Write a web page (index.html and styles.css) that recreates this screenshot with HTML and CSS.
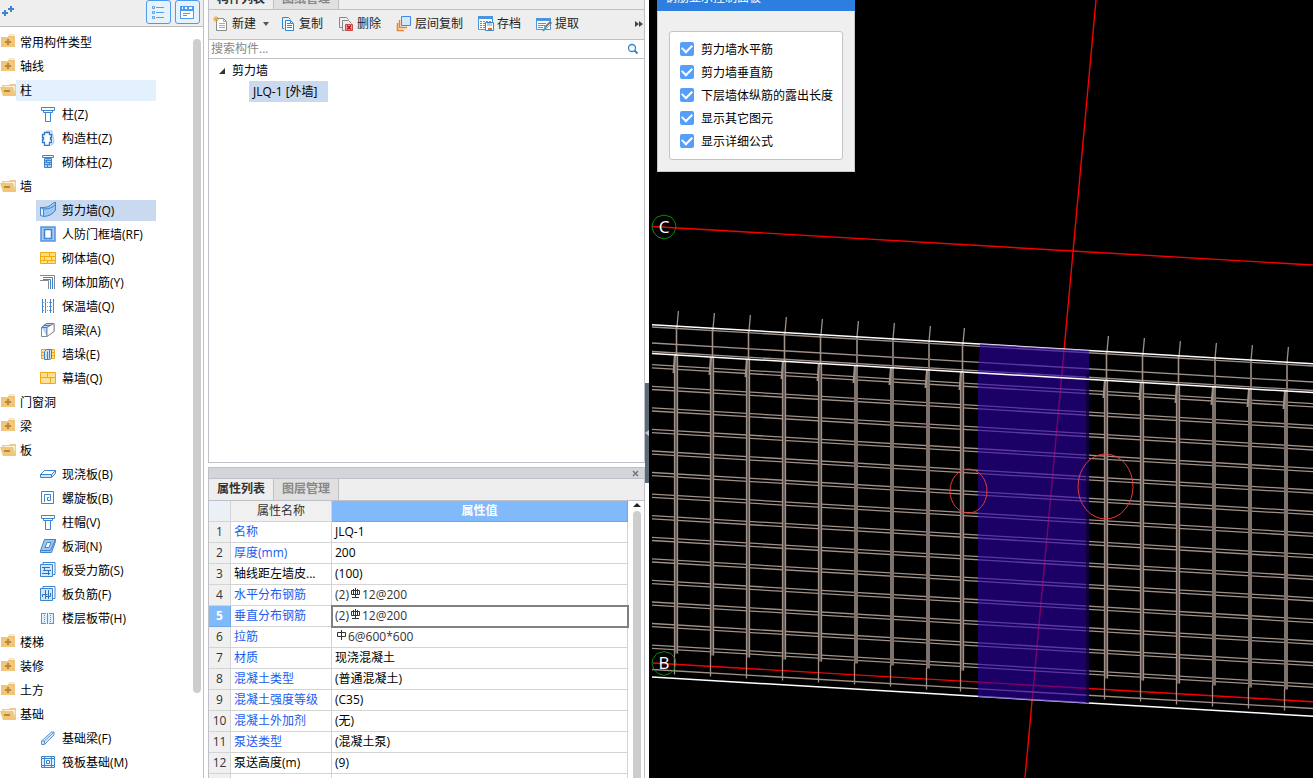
FILE: index.html
```html
<!DOCTYPE html>
<html lang="zh-CN">
<head>
    <meta charset="UTF-8">
    <meta name="viewport" content="width=device-width, initial-scale=1.0">
    <title>构件列表</title>
    <link rel="stylesheet" href="styles.css">
</head>
<body>
    <!-- icon set -->
    <svg class="icon-defs" aria-hidden="true">
        <symbol id="folder" viewBox="0 0 16 16"><path d="M8 1.500L9 .5h5l1 1z" fill="#f3cf8d"/><path d="M1 3h14v10H1z" fill="#efc67c"/><path d="M1 3h7V2h7v1z" fill="#efc67c"/><path d="M5 8h6M8 5v6" stroke="#b98a35" stroke-width="2"/></symbol>
        <symbol id="folder-open" viewBox="0 0 16 16"><path d="M2 3h7l1-1h6v12H3z" fill="#f0cb86"/><path d="M3 4h12v8z" fill="#fdf3dc"/><path d="M0 5h13l3 9H3z" fill="#efc67c"/><path d="M4 9h6" stroke="#b98a35" stroke-width="2"/></symbol>
        <symbol id="column" viewBox="0 0 16 16"><path d="M1.500 1.500h13v3h-13zM3.500 4.500h9v2h-9zM5.500 6.500h5v9h-5z" fill="#fff" stroke="#3c84cf"/></symbol>
        <symbol id="struct-column" viewBox="0 0 16 16"><path d="M6 2l2-1h4v3l1 1v3l1 2-1 4-2 1" fill="none" stroke="#9dbde0"/><path d="M4.500 2.500h5v2h2v3h-1v2h1v3h-2v3h-5v-3h-2v-3h1v-2h-1v-3h2z" fill="#fff" stroke="#2f7ac8" stroke-width="1.300"/></symbol>
        <symbol id="brick-column" viewBox="0 0 16 16"><path d="M2.500 1.500h11v2h-11z" fill="#fff" stroke="#3c84cf"/><path d="M4.500 4.500h7v9h-7z" fill="#a9cdf3" stroke="#3c84cf"/><path d="M5 6.500h6M5 8.500h6M5 10.500h6M8 5v1M6.500 7v1M9.500 9v1M7.500 11v2" stroke="#3c84cf"/></symbol>
        <symbol id="shear-wall" viewBox="0 0 16 16"><path d="M.5 5.500Q9 6 12.500 1.500L15.500 0v8Q12 14 3.500 14.500l-3-1z" fill="#9cc8f3" stroke="#3c84cf"/><path d="M.5 5.500l3 1.500Q12 7 15.500 2.500M3.500 7v7.500" fill="none" stroke="#3c84cf"/><path d="M1 6.500l2 1v6l-2-.5z" fill="#e4f0fc"/></symbol>
        <symbol id="frame-wall" viewBox="0 0 16 16"><path d="M1 1h14v14H1z" fill="#a9cbf2" stroke="#5793da" stroke-width="1.500"/><path d="M4.500 3.500h7v9h-7z" fill="#fff" stroke="#3c84cf" stroke-width="1.500"/></symbol>
        <symbol id="brick-wall" viewBox="0 0 16 16"><path d="M.5 2.500h15v11H.5z" fill="#ffdf8e" stroke="#f6a90a"/><path d="M1 6.500h14M1 10.500h14M9.500 3v3M4.500 7v3M11.500 7v3M7.500 11v2" stroke="#f6a90a"/></symbol>
        <symbol id="rebar-corner" viewBox="0 0 16 16"><path d="M0 1.500h14.500V15M0 6.500h8.500V15" fill="none" stroke="#85898e"/><path d="M3 3.500h9.500V15M3 5.500h7.500V15" fill="none" stroke="#3c84cf"/></symbol>
        <symbol id="insulated-wall" viewBox="0 0 16 16"><path d="M2.500 1v14M5.500 1v14M10.500 1v14M13.500 1v14" stroke="#3c84cf"/><path d="M3 4.500h11M3 8.500h11M3 12.500h11" stroke="#7f9dbd" stroke-dasharray="1 1"/></symbol>
        <symbol id="hidden-beam" viewBox="0 0 16 16"><path d="M1.500 5.500l5-4h7.500v8l-8 5h-4.500z" fill="#fff" stroke="#85898e"/><path d="M1.500 5.500l5-4h7.500l-7 4v9M1.500 5.500h5.500" fill="#b9d5f4" stroke="#3c84cf"/><path d="M7 5.500l7-4v8l-7 5z" fill="#fff" stroke="#85898e"/><path d="M4 3.500h6.500" stroke="#3c84cf"/></symbol>
        <symbol id="wall-pier" viewBox="0 0 16 16"><path d="M1.500 3.500h13v9h-13z" fill="#ffe095" stroke="#f6a90a"/><path d="M1 6.500h14M1 9.500h14" stroke="#f6a90a"/><path d="M4.500 5.500l2-2h5v9l-2 1h-5z" fill="#cfe2f8" stroke="#3c84cf"/><path d="M7.500 5.500v8M9.500 3.500v9" stroke="#3c84cf"/></symbol>
        <symbol id="curtain-wall" viewBox="0 0 16 16"><path d="M.5 2.500h15v11H.5z" fill="#ffe095" stroke="#f6a90a"/><path d="M1 7.500h14M7.500 3v5M10.500 8v5" stroke="#f6a90a"/></symbol>
        <symbol id="slab" viewBox="0 0 16 16"><path d="M.5 8.500l4-4h11v3l-4 4H.5z" fill="#d5e6f8" stroke="#3c84cf"/><path d="M.5 8.500l4-4h11l-4 4z" fill="#fff" stroke="#3c84cf"/><path d="M11.500 8.500v3" stroke="#3c84cf"/></symbol>
        <symbol id="spiral-slab" viewBox="0 0 16 16"><path d="M1.500 1.500h12v12h-12z" fill="#fff" stroke="#3c84cf"/><path d="M4.500 12v-7.500h6v6h-3v-3h1.500" fill="none" stroke="#3c84cf"/></symbol>
        <symbol id="slab-hole" viewBox="0 0 16 16"><path d="M.5 14.500v-2l4-11h11v2l-4 11z" fill="#9cc5f0" stroke="#3c84cf"/><path d="M.5 12.500h10l5-11" fill="none" stroke="#3c84cf"/><path d="M5 9.500l2-5h4l-2 5z" fill="#fff" stroke="#3c84cf"/></symbol>
        <symbol id="slab-rebar" viewBox="0 0 16 16"><path d="M3 2.500V.5h12v12h-2" fill="#fff" stroke="#3c84cf"/><path d="M.5 2.500h12v12H.5z" fill="#d5e8fb" stroke="#3c84cf"/><path d="M2 5.500h8M3 8.500h8M2 11.500h8M4.500 5v4M8.500 8v5" stroke="#2f72b8"/></symbol>
        <symbol id="slab-negative" viewBox="0 0 16 16"><path d="M3 2.500V.5h12v12h-2" fill="#fff" stroke="#3c84cf"/><path d="M.5 2.500h12v12H.5z" fill="#d5e8fb" stroke="#3c84cf"/><path d="M5.500 4v9M8.500 4v9M2.500 11V8.500h5M6 10.500h4.500V7" fill="none" stroke="#2f72b8"/></symbol>
        <symbol id="slab-strip" viewBox="0 0 16 16"><path d="M1.500 3.500h12v10h-12z" fill="#e2effc"/><path d="M1 3.500h5M9 3.500h5M1 13.500h5M9 13.500h5M1.500 3v11M13.500 3v11M7.500 3v11" stroke="#5a94d6"/><path d="M4.500 5v8M10.500 5v8" stroke="#5a94d6" stroke-dasharray="1 1"/></symbol>
        <symbol id="found-beam" viewBox="0 0 16 16"><path d="M1.500 11l10-9h2.500v3l-9.500 9.500h-3z" fill="#dbe9f9" stroke="#5a94d6"/><path d="M1.500 11h3v3.500M4.500 11L14 2" fill="none" stroke="#5a94d6"/></symbol>
        <symbol id="raft" viewBox="0 0 16 16"><path d="M1.500 2.500h13v11h-13z" fill="#e5f0fc" stroke="#3c84cf"/><path d="M4.500 2v12M11.500 2v12M1 4.500h14M1 11.500h14" stroke="#3c84cf"/><path d="M6.500 6.500h3v3h-3z" fill="#fff" stroke="#3c84cf"/></symbol>
        <symbol id="rebar-c" viewBox="0 0 11 11"><path d="M1.500 2.500h8v4h-8zM5.500 0v10M3.500 1v6M7.500 1v6M2 9.500h7" fill="none" stroke="#333"/></symbol>
        <symbol id="rebar-a" viewBox="0 0 11 11"><path d="M1.500 2.500h8v4h-8zM5.500 0v10" fill="none" stroke="#333"/></symbol>
    </svg>

    <div class="app">
        <nav class="sidebar">
            <div class="sidebar-bar">
                <button class="add-btn" aria-label="添加"><svg width="14" height="14"><path d="M2 9h6M5 6v6M8 5h6M11 2v6" stroke="#3c84cf" stroke-width="2"/></svg></button>
                <button class="view-btn" aria-label="列表"><svg width="16" height="16"><path d="M2.500 2.500h2v2h-2zM2.500 7.500h2v2h-2zM2.500 12.500h2v2h-2zM6 3.500h8M6 8.500h8M6 13.500h8" fill="none" stroke="#5b9fe6"/></svg></button>
                <button class="view-btn" aria-label="面板"><svg width="16" height="16"><path d="M1 2h14v13H1z" fill="#4b9bee"/><path d="M2 7h12v7H2z" fill="#fff"/><path d="M3 4h1M6 4h2M10 4h3" stroke="#fff" stroke-width="2"/><path d="M4 9.500h7M4 11.500h4" stroke="#4b9bee"/></svg></button>
            </div>
            <div class="sidebar-body">
                <ul class="tree">
                    <li><a href="#" class="group"><svg class="icon"><use href="#folder"/></svg><span>常用构件类型</span></a></li>
                    <li><a href="#" class="group"><svg class="icon"><use href="#folder"/></svg><span>轴线</span></a></li>
                    <li><a href="#" class="group hover"><svg class="icon"><use href="#folder-open"/></svg><span>柱</span></a>
                        <ul>
                            <li><a href="#" class="item"><svg class="icon"><use href="#column"/></svg>柱(Z)</a></li>
                            <li><a href="#" class="item"><svg class="icon"><use href="#struct-column"/></svg>构造柱(Z)</a></li>
                            <li><a href="#" class="item"><svg class="icon"><use href="#brick-column"/></svg>砌体柱(Z)</a></li>
                        </ul>
                    </li>
                    <li><a href="#" class="group"><svg class="icon"><use href="#folder-open"/></svg><span>墙</span></a>
                        <ul>
                            <li><a href="#" class="item selected"><svg class="icon"><use href="#shear-wall"/></svg>剪力墙(Q)</a></li>
                            <li><a href="#" class="item"><svg class="icon"><use href="#frame-wall"/></svg>人防门框墙(RF)</a></li>
                            <li><a href="#" class="item"><svg class="icon"><use href="#brick-wall"/></svg>砌体墙(Q)</a></li>
                            <li><a href="#" class="item"><svg class="icon"><use href="#rebar-corner"/></svg>砌体加筋(Y)</a></li>
                            <li><a href="#" class="item"><svg class="icon"><use href="#insulated-wall"/></svg>保温墙(Q)</a></li>
                            <li><a href="#" class="item"><svg class="icon"><use href="#hidden-beam"/></svg>暗梁(A)</a></li>
                            <li><a href="#" class="item"><svg class="icon"><use href="#wall-pier"/></svg>墙垛(E)</a></li>
                            <li><a href="#" class="item"><svg class="icon"><use href="#curtain-wall"/></svg>幕墙(Q)</a></li>
                        </ul>
                    </li>
                    <li><a href="#" class="group"><svg class="icon"><use href="#folder"/></svg><span>门窗洞</span></a></li>
                    <li><a href="#" class="group"><svg class="icon"><use href="#folder"/></svg><span>梁</span></a></li>
                    <li><a href="#" class="group"><svg class="icon"><use href="#folder-open"/></svg><span>板</span></a>
                        <ul>
                            <li><a href="#" class="item"><svg class="icon"><use href="#slab"/></svg>现浇板(B)</a></li>
                            <li><a href="#" class="item"><svg class="icon"><use href="#spiral-slab"/></svg>螺旋板(B)</a></li>
                            <li><a href="#" class="item"><svg class="icon"><use href="#column"/></svg>柱帽(V)</a></li>
                            <li><a href="#" class="item"><svg class="icon"><use href="#slab-hole"/></svg>板洞(N)</a></li>
                            <li><a href="#" class="item"><svg class="icon"><use href="#slab-rebar"/></svg>板受力筋(S)</a></li>
                            <li><a href="#" class="item"><svg class="icon"><use href="#slab-negative"/></svg>板负筋(F)</a></li>
                            <li><a href="#" class="item"><svg class="icon"><use href="#slab-strip"/></svg>楼层板带(H)</a></li>
                        </ul>
                    </li>
                    <li><a href="#" class="group"><svg class="icon"><use href="#folder"/></svg><span>楼梯</span></a></li>
                    <li><a href="#" class="group"><svg class="icon"><use href="#folder"/></svg><span>装修</span></a></li>
                    <li><a href="#" class="group"><svg class="icon"><use href="#folder"/></svg><span>土方</span></a></li>
                    <li><a href="#" class="group"><svg class="icon"><use href="#folder-open"/></svg><span>基础</span></a>
                        <ul>
                            <li><a href="#" class="item"><svg class="icon"><use href="#found-beam"/></svg>基础梁(F)</a></li>
                            <li><a href="#" class="item"><svg class="icon"><use href="#raft"/></svg>筏板基础(M)</a></li>
                        </ul>
                    </li>
                </ul>
                <div class="scroll"><div class="thumb"></div></div>
            </div>
        </nav>

        <div class="middle">
            <section class="panel list-panel">
                <div class="tabs">
                    <button class="tab active">构件列表</button>
                    <button class="tab">图纸管理</button>
                </div>
                <div class="toolbar">
                    <button><svg class="icon"><path d="M3.500 2.500h7l3 3v9h-10z" fill="#fff" stroke="#888"/><path d="M10.500 2.500v3h3M6 7.500h6M6 9.500h6M6 11.500h6" fill="none" stroke="#aaa"/><path d="M3 0v6M0 3h6M1 1l4 4M5 1L1 5" stroke="#f0a030"/></svg>新建</button>
                    <button class="caret" aria-label="更多新建"><svg width="6" height="4"><path d="M0 0h6L3 4z" fill="#555"/></svg></button>
                    <button><svg class="icon"><path d="M4 12.500H2.500v-11h6l2 2" fill="none" stroke="#2f86d2"/><path d="M5.500 4.500h5l3 3v7h-8z" fill="#fff" stroke="#2f86d2"/><path d="M7 7.500h3M7 9.500h5M7 11.500h5M10.500 5v2.500H13" fill="none" stroke="#2f86d2"/></svg>复制</button>
                    <button><svg class="icon"><path d="M4 11.500H1.500v-10h7l2 2M6.500 14.500h-2v-10h6l3 3" fill="none" stroke="#888"/><path d="M7.500 8.500h7v6h-7z" fill="#f0a0a0" stroke="#cf4a4a"/><path d="M9 9.500l4 4M13 9.500l-4 4" stroke="#b81818" stroke-width="1.500"/></svg>删除</button>
                    <button><svg class="icon"><path d="M5.500.5h9v9h-9z" fill="#d5e8fb" stroke="#3c8be0"/><path d="M3.500 4v7.500H11M1.500 7v7.500H8" fill="none" stroke="#f08424" stroke-width="1.500"/></svg>层间复制</button>
                    <button><svg class="icon"><path d="M.5.5h14v13H.5z" fill="#fff" stroke="#4b94e0"/><path d="M0 0h15v3H0z" fill="#4b94e0"/><path d="M2 5.500h11M2 7.500h6M2 9.500h5M2 11.500h5" stroke="#888" stroke-dasharray="2 1"/><path d="M7.500 6.500h8v8h-8z" fill="#fff" stroke="#3c84cf"/><path d="M9 7h5v3H9z" fill="#a8cdf4"/><path d="M10 12h4v2h-4z" fill="#f06a1a"/></svg>存档</button>
                    <button><svg class="icon"><path d="M.5 2.500h14v11H.5z" fill="#fff" stroke="#4b94e0"/><path d="M0 2h15v3H0z" fill="#4b94e0"/><path d="M2 7.500h8M2 9.500h7M2 11.500h5" stroke="#888"/><path d="M15 6l-6 6" stroke="#777" stroke-width="3"/><path d="M14 8l-5 5" stroke="#dde4ea"/><path d="M10 11l-3 4" stroke="#20aecf" stroke-width="2"/></svg>提取</button>
                    <button class="more" aria-label="更多"><svg width="8" height="6"><path d="M0 0l4 3-4 3zM4 0l4 3-4 3z" fill="#444"/></svg></button>
                </div>
                <div class="search">
                    <input type="text" aria-label="搜索构件" placeholder="搜索构件...">
                    <button aria-label="搜索"><svg width="12" height="12"><circle cx="5" cy="5" r="3.500" fill="none" stroke="#2f86c4" stroke-width="1.300"/><path d="M7.500 7.500l3 3" stroke="#2f86c4" stroke-width="2"/></svg></button>
                </div>
                <ul class="parts">
                    <li><svg width="6" height="6"><path d="M6 0v6H0z" fill="#333"/></svg>剪力墙
                        <ul><li><a href="#">JLQ-1 [外墙]</a></li></ul>
                    </li>
                </ul>
            </section>

            <section class="panel props-panel">
                <div class="grip"><button aria-label="关闭"><svg width="7" height="7"><path d="M1 1l5 5M6 1L1 6" stroke="#777" stroke-width="1.500"/></svg></button></div>
                <div class="tabs">
                    <button class="tab active">属性列表</button>
                    <button class="tab">图层管理</button>
                </div>
                <div class="props-body">
                    <table>
                        <colgroup><col class="col-no"><col class="col-name"><col></colgroup>
                        <thead>
                            <tr><th></th><th>属性名称</th><th class="value-head">属性值</th></tr>
                        </thead>
                        <tbody>
                            <tr><th>1</th><td class="blue">名称</td><td>JLQ-1</td></tr>
                            <tr><th>2</th><td class="blue">厚度(mm)</td><td>200</td></tr>
                            <tr><th>3</th><td>轴线距左墙皮...</td><td>(100)</td></tr>
                            <tr><th>4</th><td class="blue">水平分布钢筋</td><td class="rebar">(2)<svg><use href="#rebar-c"/></svg>12@200</td></tr>
                            <tr class="current"><th>5</th><td class="blue">垂直分布钢筋</td><td class="rebar">(2)<svg><use href="#rebar-c"/></svg>12@200</td></tr>
                            <tr><th>6</th><td class="blue">拉筋</td><td class="rebar"><svg><use href="#rebar-a"/></svg>6@600*600</td></tr>
                            <tr><th>7</th><td class="blue">材质</td><td>现浇混凝土</td></tr>
                            <tr><th>8</th><td class="blue">混凝土类型</td><td>(普通混凝土)</td></tr>
                            <tr><th>9</th><td class="blue">混凝土强度等级</td><td>(C35)</td></tr>
                            <tr><th>10</th><td class="blue">混凝土外加剂</td><td>(无)</td></tr>
                            <tr><th>11</th><td class="blue">泵送类型</td><td>(混凝土泵)</td></tr>
                            <tr><th>12</th><td>泵送高度(m)</td><td>(9)</td></tr>
                            <tr><th></th><td></td><td></td></tr>
                        </tbody>
                    </table>
                    <div class="scroll">
                        <svg width="8" height="4"><path d="M0 4l4-4 4 4z" fill="#222"/></svg>
                        <div class="thumb"></div>
                    </div>
                </div>
            </section>
        </div>

        <div class="splitter"><button aria-label="折叠"><svg width="4" height="6"><path d="M4 0v6L0 3z" fill="#c3cad0"/></svg></button></div>

        <main class="view">
            <svg class="model" viewBox="649 0 664 778" preserveAspectRatio="xMinYMin slice">
                <defs>
                    <path id="pair" d="M652 364.700l661 39M652 367.900l661 39"/>
                    <g id="bar">
                        <path d="M678.400 311l-1.500 17"/>
                        <path d="M676.500 326v30" stroke-width="1.600"/>
                        <path d="M676 356v297.500" stroke-width="4" stroke="#5c5450"/>
                        <path d="M674.500 356v318.500M677.500 356v297.500"/>
                        <path d="M675 355l-1.500 18" stroke-width="2"/>
                    </g>
                    <g id="bar-thick">
                        <path d="M678.400 311l-1.500 17"/>
                        <path d="M677 326v30" stroke-width="2" stroke="#7d726c"/>
                        <path d="M676 356v297.500" stroke-width="4" stroke="#7d726c"/>
                        <path d="M674.500 653v21.500"/>
                        <path d="M675 355l-1.500 18" stroke-width="2"/>
                    </g>
                </defs>

                <g class="axis">
                    <path d="M652 226.500L1313 265M653 663l660 38.700M1096 0l-71 778"/>
                </g>

                <g class="steel">
                    <path d="M652 327l661 39M652 343l661 39M652 351.500l661 39M652 669.500l661 39"/>
                    <use href="#pair"/>
                    <use href="#pair" y="21.600"/>
                    <use href="#pair" y="43.100"/>
                    <use href="#pair" y="64.700"/>
                    <use href="#pair" y="86.300"/>
                    <use href="#pair" y="107.800"/>
                    <use href="#pair" y="129.400"/>
                    <use href="#pair" y="151"/>
                    <use href="#pair" y="172.600"/>
                    <use href="#pair" y="194.100"/>
                    <use href="#pair" y="215.700"/>
                    <use href="#pair" y="237.300"/>
                    <use href="#pair" y="258.800"/>
                    <use href="#pair" y="280.400"/>
                    <use href="#bar"/>
                    <use href="#bar" x="36" y="2"/>
                    <use href="#bar" x="72" y="4"/>
                    <use href="#bar" x="108" y="6"/>
                    <use href="#bar" x="144" y="8"/>
                    <use href="#bar-thick" x="180" y="10"/>
                    <use href="#bar-thick" x="216" y="12"/>
                    <use href="#bar-thick" x="252" y="15"/>
                    <use href="#bar" x="286" y="17"/>
                    <use href="#bar" x="430" y="25"/>
                    <use href="#bar" x="466" y="27"/>
                    <use href="#bar" x="502" y="30"/>
                    <use href="#bar-thick" x="538" y="32"/>
                    <use href="#bar-thick" x="574" y="34"/>
                    <use href="#bar-thick" x="610" y="36"/>
                </g>

                <path class="edge" d="M652 324.700l661 39M652 677l661 39.300"/>
                <path d="M980 344l109 6.500V703.500L978 697V372z" fill="#2d00aa" fill-opacity=".6"/>
                <path d="M1086 374h3v329h-3z" fill="#08001c" fill-opacity=".6"/>
                <path class="edge" d="M652 353.600l661 39"/>

                <g fill="none" stroke="#e83a36">
                    <ellipse cx="968.500" cy="491" rx="18.500" ry="22"/>
                    <ellipse cx="1105.500" cy="486.500" rx="27.500" ry="32.500"/>
                </g>

                <g class="mark">
                    <path d="M664 215l7 2 4 5 1 5-2 6-4 4-6 2-6-2-4-4-2-6 1-5 4-5z"/>
                    <text x="664" y="233">C</text>
                    <path d="M664 651.500l7 2 4 5 1 5-2 6-4 4-6 2-6-2-4-4-2-6 1-5 4-5z"/>
                    <text x="664" y="669">B</text>
                </g>
            </svg>

            <form class="dialog">
                <div class="dialog-title">钢筋显示控制面板</div>
                <div class="options">
                    <label><input type="checkbox" checked>剪力墙水平筋</label>
                    <label><input type="checkbox" checked>剪力墙垂直筋</label>
                    <label><input type="checkbox" checked>下层墙体纵筋的露出长度</label>
                    <label><input type="checkbox" checked>显示其它图元</label>
                    <label><input type="checkbox" checked>显示详细公式</label>
                </div>
            </form>
        </main>
    </div>
</body>
</html>
```
FILE: styles.css
```css
* {
    box-sizing: border-box;
}
body {
    margin: 0;
    font-family: "Open Sans", "Noto Sans CJK SC", sans-serif;
    font-size: 12px;
    line-height: 20px;
    color: #000;
    background: #fff;
    overflow: hidden;
}
button, input {
    font: inherit;
    color: inherit;
    padding: 0;
    margin: 0;
    border: none;
    background: none;
}
a {
    color: inherit;
    text-decoration: none;
}
ul {
    list-style: none;
    margin: 0;
    padding: 0;
}
svg {
    display: block;
    flex: none;
}
.icon {
    width: 16px;
    height: 16px;
}
.icon-defs {
    position: absolute;
    width: 0;
    height: 0;
}
.app {
    display: flex;
    height: 100vh;
}

/* component type tree */
.sidebar {
    flex: 0 0 204px;
    display: flex;
    flex-direction: column;
    border-right: 1px solid #bdbdc2;
    overflow: hidden;
}
.sidebar-bar {
    flex: 0 0 27px;
    display: flex;
    align-items: flex-start;
    gap: 4px;
    padding-right: 3px;
    background: #eee;
    border-bottom: 1px solid #bdbdbd;
}
.add-btn {
    margin-right: auto;
    padding-top: 4px;
}
.view-btn {
    display: flex;
    align-items: center;
    justify-content: center;
    width: 25px;
    height: 24px;
    padding-right: 1px;
    border: 1px solid #4b9bee;
    border-radius: 3px;
    background: #e6f2fe;
}
.sidebar-body {
    flex: 1;
    display: flex;
    min-height: 0;
}
.tree {
    flex: 1;
    padding-top: 5px;
}
.tree .icon {
    margin-bottom: 1px;
}
.group, .item {
    display: flex;
    align-items: center;
    height: 21px;
    margin-bottom: 3px;
    line-height: 21px;
    white-space: nowrap;
}
.group {
    width: 156px;
}
.group span {
    flex: 1;
    padding-left: 4px;
}
.group.hover span {
    background: #e3f1fe;
}
.item {
    gap: 6px;
    width: 120px;
    margin-left: 36px;
    padding-left: 4px;
}
.item.selected {
    background: #c9d9f0;
}
.scroll {
    flex: none;
    width: 16px;
    padding-left: 5px;
}
.thumb {
    width: 8px;
    border-radius: 4px;
    background: #cdcdcd;
}
.sidebar .scroll {
    width: 10px;
    padding: 12px 0 0;
}
.sidebar .thumb {
    height: 88.5%;
}

/* middle column */
.middle {
    flex: 0 0 437px;
    display: flex;
    flex-direction: column;
    gap: 4px;
    margin-left: 4px;
}
.panel {
    display: flex;
    flex-direction: column;
    border: 1px solid #c0c1c8;
    overflow: hidden;
}
.list-panel {
    flex: 0 0 60%;
    margin-top: -4px;
    border-top: none;
}
.props-panel {
    flex: 1;
    border-bottom: none;
}
.tabs {
    flex: 0 0 22px;
    display: flex;
    background: #eee;
    border-bottom: 1px solid #c0c1c8;
}
.list-panel .tabs {
    margin-top: -8px;
}
.tab {
    width: 65px;
    border-right: 1px solid #c0c1c8;
    background: #e0e0e0;
    color: #888;
    font-weight: bold;
}
.tab.active {
    background: #eee;
    color: #333;
}
.toolbar {
    flex: 0 0 30px;
    display: flex;
    align-items: center;
    gap: 15px;
    padding: 0 1px 1px 4px;
    background: #eee;
    border-bottom: 1px solid #c0c1c8;
    color: #222;
}
.toolbar button {
    display: flex;
    align-items: center;
    gap: 3px;
    white-space: nowrap;
}
.toolbar .caret {
    margin: 0 -4px 0 -8px;
}
.toolbar .more {
    margin-left: auto;
}
.search {
    flex: 0 0 19px;
    display: flex;
    align-items: center;
    padding: 0 5px 0 2px;
    border-bottom: 1px solid #c0c1c8;
}
.search input {
    flex: 1;
    height: 18px;
    outline: none;
}
.search input::placeholder {
    color: #888;
}
.parts {
    padding: 1px 0 0 10px;
    line-height: 21px;
}
.parts > li {
    display: grid;
    grid-template-columns: 6px 1fr;
    align-items: center;
    column-gap: 7px;
}
.parts ul {
    grid-column: 2;
    padding-left: 17px;
}
.parts a {
    display: inline-block;
    padding: 0 10px 0 4px;
    background: #c9d9f0;
}

/* property table */
.grip {
    flex: 0 0 11px;
    display: flex;
    align-items: center;
    justify-content: flex-end;
    padding-right: 5px;
    background: #d4d5da;
    border-bottom: 1px solid #c0c1c8;
}
.grip button {
    padding-top: 1px;
}
.props-body {
    flex: 1;
    display: flex;
    align-items: stretch;
    min-height: 0;
}
table {
    flex: 1;
    table-layout: fixed;
    border-spacing: 0;
    align-self: flex-start;
}
.col-no {
    width: 22px;
}
.col-name {
    width: 101px;
}
th, td {
    height: 21px;
    padding: 0 3px;
    border: solid #d4d4d4;
    border-width: 0 1px 1px 0;
    line-height: 20px;
    text-align: left;
    white-space: nowrap;
}
th {
    padding: 0;
    background: #f0f0f0;
    color: #333;
    font-weight: normal;
    text-align: center;
}
thead th:first-child {
    background: #ebf0f6;
}
thead .value-head, .current th {
    background: #80bafa;
    border-color: #6aa8ea;
    color: #fff;
    font-weight: bold;
}
.blue {
    color: #1a5cf0;
}
.rebar {
    color: #333;
}
.rebar svg {
    display: inline-block;
    width: 11px;
    height: 11px;
    margin: 0 1px;
    vertical-align: 0;
}
.current .rebar {
    outline: 2px solid #808080;
    outline-offset: -1px;
}
.props-body .scroll {
    display: flex;
    flex-direction: column;
    gap: 4px;
    padding-top: 2px;
}
.props-body .thumb {
    flex: 1;
    border-radius: 4px 4px 0 0;
}

/* collapse handle */
.splitter {
    flex: 0 0 4px;
    display: flex;
    align-items: center;
    padding-top: 88px;
}
.splitter button {
    width: 4px;
    height: 100px;
    background: #5b6a76;
}

/* model view */
.view {
    position: relative;
    flex: 1;
    min-width: 0;
    background: #000;
    overflow: hidden;
}
.model {
    width: 100%;
    height: 100%;
}
.axis {
    fill: none;
    stroke: #f80000;
    stroke-width: 1.4;
}
.steel {
    fill: none;
    stroke: #a09088;
    stroke-width: 1.3;
}
.edge {
    fill: none;
    stroke: #fff;
    stroke-width: 1.5;
}
.mark path {
    fill: none;
    stroke: #0a8a0a;
}
.mark text {
    fill: #fff;
    font-size: 17px;
    text-anchor: middle;
}
.dialog {
    position: absolute;
    top: -15px;
    left: 8px;
    width: 198px;
    background: #efefef;
    border: 1px solid #c6c8d0;
    border-top: none;
}
.dialog-title {
    height: 26px;
    padding-left: 8px;
    margin: 0 -1px;
    line-height: 26px;
    background: #2c7fe0;
    color: #fff;
}
.options {
    margin: 20px 11px 11px;
    padding: 6px 0 6px 10px;
    background: #fff;
    border: 1px solid #c4c4c8;
    border-radius: 3px;
}
.options label {
    display: flex;
    align-items: center;
    gap: 7px;
    height: 23px;
    white-space: nowrap;
}
.options input {
    appearance: none;
    flex: none;
    display: grid;
    place-items: center;
    width: 14px;
    height: 14px;
    margin-bottom: 1px;
    border-radius: 2px;
    background: #559ffa;
}
.options input:checked::after {
    content: "";
    width: 8px;
    height: 5px;
    margin-bottom: 3px;
    border: solid #fff;
    border-width: 0 0 2px 2px;
    transform: rotate(-45deg);
}
```
